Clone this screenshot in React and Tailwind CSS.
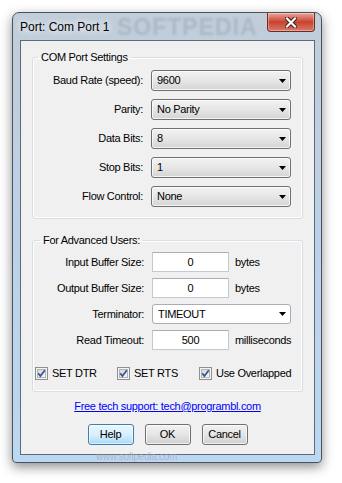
import React from 'react';

const font = 'font-["Liberation_Sans",Arial,sans-serif]';

const Arrow = () => (
  <svg width="7" height="4" viewBox="0 0 7 4">
    <path d="M0 0h7L3.5 4z" fill="#000" />
  </svg>
);

const Combo = ({ value, className }) => (
  <div
    className={`flex items-center justify-between rounded-[3px] border border-[#707070] bg-gradient-to-b from-[#f2f2f2] via-[#e6e6e6] to-[#d4d4d4] pl-[5px] pr-[4px] shadow-[inset_0_0_0_1px_rgba(255,255,255,0.7)] ${className}`}
  >
    <span>{value}</span>
    <Arrow />
  </div>
);

const TextBox = ({ value }) => (
  <div className="flex h-[20px] w-[77px] items-center justify-center border border-[#c4c8cf] border-t-[#abadb3] bg-white">
    {value}
  </div>
);

const Check = ({ label }) => (
  <div className="flex items-center gap-[4px]">
    <svg width="13" height="13" viewBox="0 0 13 13">
      <defs>
        <linearGradient id="cbg" x1="0" y1="0" x2="1" y2="1">
          <stop offset="0" stopColor="#d2d4d6" />
          <stop offset="1" stopColor="#fbfbfb" />
        </linearGradient>
      </defs>
      <rect x="0.5" y="0.5" width="12" height="12" fill="#f4f4f4" stroke="#8e8f8f" />
      <rect x="2.5" y="2.5" width="8" height="8" fill="url(#cbg)" stroke="#b3b5b8" />
      <path d="M3.2 6.3 L5.4 9 L9.8 3.3" fill="none" stroke="#3d5694" strokeWidth="1.8" />
    </svg>
    <span>{label}</span>
  </div>
);

const Button = ({ children, focused }) => (
  <div
    className={
      focused
        ? 'flex h-[21px] w-[46px] items-center justify-center rounded-[3px] border border-[#3c7fb1] bg-gradient-to-b from-[#eaf6fd] via-[#d9f0fc] to-[#a7d9f5] shadow-[inset_0_0_0_1px_rgba(255,255,255,0.6)]'
        : 'flex h-[21px] w-[46px] items-center justify-center rounded-[3px] border border-[#707070] bg-gradient-to-b from-[#f2f2f2] via-[#e6e6e6] to-[#cfcfcf] shadow-[inset_0_0_0_1px_rgba(255,255,255,0.7)]'
    }
  >
    {children}
  </div>
);

export default function App() {
  return (
    <div className={`h-[483px] w-[342px] overflow-hidden bg-white pl-[12px] pt-[12px] text-[11px] leading-[13px] tracking-[-0.3px] text-black ${font}`}>
      {/* window frame */}
      <div className="relative flex h-[451px] w-[310px] flex-col rounded-b-[4px] rounded-t-[7px] border border-[#48535f] bg-gradient-to-b from-[#c1cdd9] via-[#bcd1e7] to-[#bcd7f2] shadow-[0_4px_12px_rgba(0,0,0,0.45)]">
        {/* title bar */}
        <div className="relative flex h-[27px] items-start overflow-hidden rounded-t-[6px]">
          <span className="pointer-events-none absolute left-[104px] top-[2px] text-[23px] font-bold leading-[25px] tracking-[1px] text-[#5e6b78] opacity-20 blur-[1px]">
            SOFTPEDIA
          </span>
          <span className="relative flex-1 self-center pl-[7px] pt-[1px] text-[12px] tracking-[0px] [text-shadow:0_0_6px_#fff,0_0_10px_#fff]">
            Port: Com Port 1
          </span>
          <div className="relative mr-[6px] flex h-[19px] w-[48px] items-center justify-center rounded-b-[4px] border border-t-0 border-[#6e2a20] bg-gradient-to-b from-[#e9a597] via-[#c8412d] to-[#d87a68] shadow-[inset_0_0_0_1px_rgba(255,255,255,0.35)]">
            <svg width="12" height="11" viewBox="0 0 12 11">
              <path d="M2 1.5 L10 9.5 M10 1.5 L2 9.5" stroke="#3b1510" strokeWidth="4" strokeLinecap="square" />
              <path d="M2 1.5 L10 9.5 M10 1.5 L2 9.5" stroke="#fff" strokeWidth="2.2" strokeLinecap="square" />
            </svg>
          </div>
        </div>

        {/* client area */}
        <div className="relative ml-[7px] mr-[6px] flex h-[415px] flex-col border border-[#5d6a78] bg-[#f0f0f0] px-[11px] pt-[10px]">
          <fieldset className="rounded-[3px] border border-[#d5dfe5] px-0 pb-[11px] pt-[6px] shadow-[inset_0_0_0_1px_#fff]">
            <legend className="ml-[5px] px-[3px]">COM Port Settings</legend>
            <div className="grid grid-cols-[110px_140px] items-center gap-x-[8px] gap-y-[8px]">
              <span className="text-right">Baud Rate (speed):</span>
              <Combo value="9600" className="h-[21px] w-[140px]" />
              <span className="text-right">Parity:</span>
              <Combo value="No Parity" className="h-[21px] w-[140px]" />
              <span className="text-right">Data Bits:</span>
              <Combo value="8" className="h-[21px] w-[140px]" />
              <span className="text-right">Stop Bits:</span>
              <Combo value="1" className="h-[21px] w-[140px]" />
              <span className="text-right">Flow Control:</span>
              <Combo value="None" className="h-[21px] w-[140px]" />
            </div>
          </fieldset>

          <fieldset className="mt-[15px] rounded-[3px] border border-[#d5dfe5] px-0 pb-[11px] pt-[5px] shadow-[inset_0_0_0_1px_#fff]">
            <legend className="ml-[7px] px-[3px]">For Advanced Users:</legend>
            <div className="grid grid-cols-[111px_auto] items-center gap-x-[8px] gap-y-[6px]">
              <span className="text-right">Input Buffer Size:</span>
              <div className="flex items-center gap-[6px]">
                <TextBox value="0" />
                <span>bytes</span>
              </div>
              <span className="text-right">Output Buffer Size:</span>
              <div className="flex items-center gap-[6px]">
                <TextBox value="0" />
                <span>bytes</span>
              </div>
              <span className="text-right">Terminator:</span>
              <Combo value="TIMEOUT" className="h-[20px] w-[139px] rounded-[2px] border-[#abadb3] from-[#ffffff] via-[#ffffff] to-[#ffffff] pl-[4px]" />
              <span className="text-right">Read Timeout:</span>
              <div className="flex items-center gap-[6px]">
                <TextBox value="500" />
                <span>milliseconds</span>
              </div>
            </div>
            <div className="mt-[17px] grid grid-cols-[82px_82px_auto] pl-[2px]">
              <Check label="SET DTR" />
              <Check label="SET RTS" />
              <Check label="Use Overlapped" />
            </div>
          </fieldset>

          <div className="mt-[8px] text-center text-[#0000ff] underline">
            Free tech support: tech@programbl.com
          </div>

          <div className="mt-[11px] flex justify-center gap-[11px]">
            <Button focused>Help</Button>
            <Button>OK</Button>
            <Button>Cancel</Button>
          </div>
        </div>

        <span className="pointer-events-none absolute bottom-[-1px] left-[83px] text-[10px] text-[#9aa7b6] opacity-60">
          www.softpedia.com
        </span>
      </div>
    </div>
  );
}
